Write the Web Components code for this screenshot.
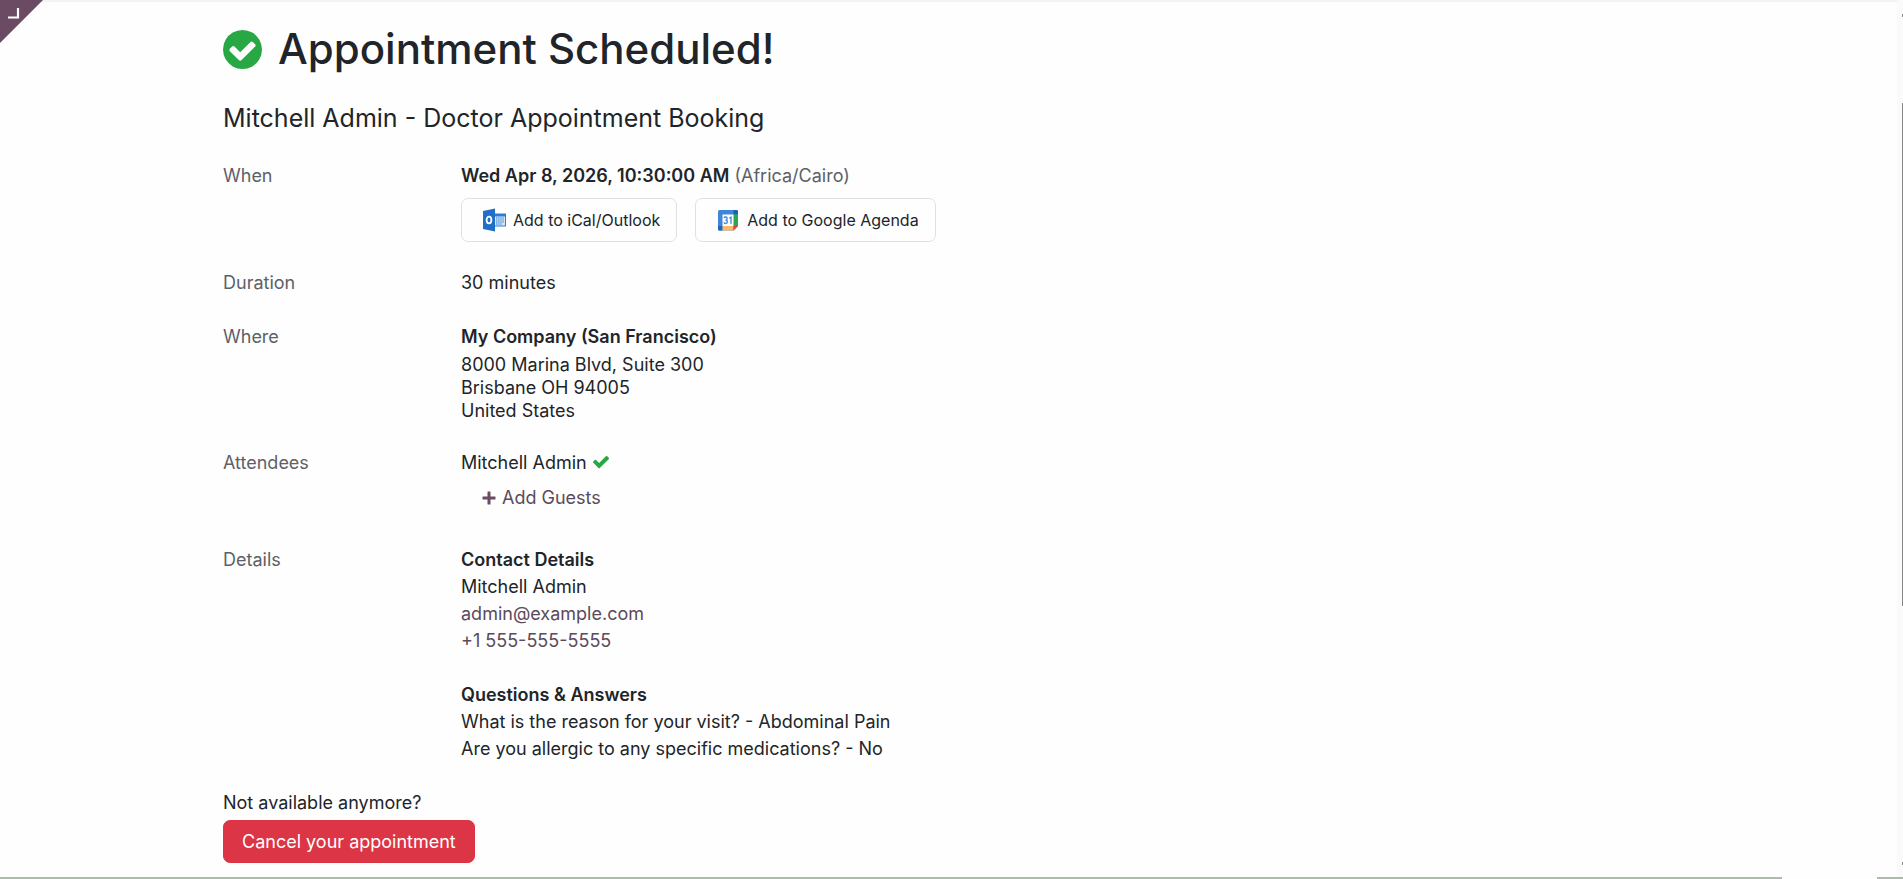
<!DOCTYPE html>
<html lang="en">
<head>
<meta charset="utf-8">
<meta name="viewport" content="width=device-width, initial-scale=1">
<title>Appointment Scheduled</title>
<style>
    body {
        margin: 0;
        background: #fefefe;
        color: #212529;
        font: 18px/27px Inter, "Liberation Sans", sans-serif;
    }
</style>
</head>
<body>
<appointment-page></appointment-page>

<script>
const icons = {
    circle: {
        box: "128 128 1536 1536",
        path: "M1412 734q0-28-18-46l-91-90q-19-19-45-19t-45 19l-408 407-226-226q-19-19-45-19t-45 19l-91 90q-18 18-18 46 0 27 18 45l362 362q19 19 45 19 27 0 46-19l543-543q18-18 18-45zm252 162q0 209-103 385.5t-279.5 279.5-385.5 103-385.5-103-279.5-279.5-103-385.5 103-385.5 279.5-279.5 385.5-103 385.5 103 279.5 279.5 103 385.5z"
    },
    check: {
        box: "121 330 1550 1192",
        path: "M1671 566q0 40-28 68l-724 724-136 136q-28 28-68 28t-68-28l-136-136-362-362q-28-28-28-68t28-68l136-136q28-28 68-28t68 28l294 295 656-657q28-28 68-28t68 28l136 136q28 28 28 68z"
    },
    plus: {
        box: "0 0 14 14",
        path: "M6 0.5h2q.5 0 .5.5v4.500h4.500q.5 0 .5.5v2q0 .5-.5.5h-4.500v4.500q0 .5-.5.5h-2q-.5 0-.5-.5v-4.500h-4.500q-.5 0-.5-.5v-2q0-.5.5-.5h4.500v-4.500q0-.5.5-.5z"
    }
};

class StatusIcon extends HTMLElement {
    constructor() {
        super();
        const icon = icons[this.getAttribute("name")];
        this.root = this.attachShadow({ mode: "open" });
        this.root.innerHTML = /*html*/`
            <style>
            :host {
                display: inline-flex;
                flex: none;
                width: 16px;
            }
            svg {
                width: 100%;
                fill: currentColor;
            }
            </style>
            <svg viewBox="${icon.box}" aria-hidden="true"><path d="${icon.path}"/></svg>
        `;
    }
}
customElements.define("status-icon", StatusIcon);

class CalendarLink extends HTMLElement {
    constructor() {
        super();
        this.root = this.attachShadow({ mode: "open" });
        this.root.innerHTML = /*html*/`
            <style>
            :host {
                display: block;
            }
            a {
                display: flex;
                align-items: center;
                gap: 6px;
                padding: 9px 16px 9px 18px;
                border: 1px solid #dee2e6;
                border-radius: 7px;
                color: #212529;
                font-size: 16px;
                line-height: 24px;
                text-decoration: none;
            }
            ::slotted(svg) {
                width: 27px;
                height: 24px;
            }
            </style>
            <a href="#"><slot name="icon"></slot><slot></slot></a>
        `;
    }
}
customElements.define("calendar-link", CalendarLink);

class InfoRow extends HTMLElement {
    constructor() {
        super();
        this.root = this.attachShadow({ mode: "open" });
        this.root.innerHTML = /*html*/`
            <style>
            :host {
                display: grid;
                grid-template-columns: 238px 1fr;
                margin-bottom: 27px;
            }
            .label {
                color: #5c6167;
            }
            </style>
            <div class="label">${this.getAttribute("label")}</div>
            <div><slot></slot></div>
        `;
    }
}
customElements.define("info-row", InfoRow);

class CornerToggle extends HTMLElement {
    constructor() {
        super();
        this.root = this.attachShadow({ mode: "open" });
        this.root.innerHTML = /*html*/`
            <style>
            :host {
                position: absolute;
                top: 0;
                left: 0;
            }
            button {
                display: block;
                padding: 0;
                border: 0;
                background: none;
            }
            svg {
                display: block;
            }
            </style>
            <button aria-label="Open editor">
                <svg width="43" height="43" viewBox="0 0 43 43">
                    <path d="M0 0H43L0 43Z" fill="#6b4a63"/>
                    <path d="M8 17.5H18V8" fill="none" stroke="#fff" stroke-width="2.2"/>
                </svg>
            </button>
        `;
    }
}
customElements.define("corner-toggle", CornerToggle);

class PageScrollbar extends HTMLElement {
    constructor() {
        super();
        this.root = this.attachShadow({ mode: "open" });
        this.root.innerHTML = /*html*/`
            <style>
            :host {
                position: absolute;
                top: 0;
                right: 0;
                bottom: 0;
                box-sizing: border-box;
                width: 6px;
                padding: 14px 0;
                display: flex;
                flex-direction: column;
                align-items: flex-end;
                background: #fafafa;
            }
            .arrow {
                width: 1px;
                height: 3px;
                background: #8b8b8b;
            }
            .track {
                flex: 1;
                display: grid;
                grid-template-rows: 86fr 503fr 256fr;
            }
            .thumb {
                grid-row: 2;
                width: 1px;
                background: #858585;
            }
            </style>
            <div class="arrow"></div>
            <div class="track"><div class="thumb"></div></div>
            <div class="arrow"></div>
        `;
    }
}
customElements.define("page-scrollbar", PageScrollbar);

class AppointmentPage extends HTMLElement {
    constructor() {
        super();
        this.root = this.attachShadow({ mode: "open" });
        this.root.innerHTML = /*html*/`
            <style>
            :host {
                display: block;
                position: relative;
                box-sizing: border-box;
                min-height: 100vh;
                padding: 0 6px 14px 0;
                overflow: hidden;
            }
            .shade {
                height: 2px;
                background: #f3f3f3;
            }
            main {
                max-width: 1451px;
                margin: 0 auto;
                padding-top: 20px;
            }
            h1, h2, p, address {
                margin: 0;
            }
            h1 {
                display: flex;
                align-items: center;
                gap: 16px;
                margin-bottom: 26px;
                font-size: 42px;
                font-weight: 500;
                line-height: 54px;
            }
            h1 status-icon {
                width: 39px;
            }
            h2 {
                margin-bottom: 28px;
                font-size: 25px;
                font-weight: 400;
                line-height: 32px;
            }
            strong {
                font-weight: 600;
            }
            status-icon.done {
                color: #28a745;
            }
            .muted {
                color: #5c6167;
            }
            .links {
                display: flex;
                flex-wrap: wrap;
                gap: 18px;
                margin-top: 9px;
            }
            address {
                margin-top: 3px;
                font-style: normal;
                line-height: 23px;
            }
            .person {
                display: flex;
                align-items: center;
                gap: 6px;
            }
            button {
                display: flex;
                align-items: center;
                gap: 6px;
                padding: 7px 18px;
                border: 1px solid transparent;
                border-radius: 7px;
                background: none;
                font: inherit;
            }
            .guests {
                padding: 7px 20px;
                color: #5b4a5c;
            }
            .guests status-icon {
                width: 14px;
                color: #6b4a63;
            }
            .contact a {
                display: table;
                color: #5b4a5c;
                text-decoration: none;
            }
            .answers {
                margin-top: 27px;
            }
            .cancel {
                margin-top: 4px;
                border-color: #dc3545;
                background: #dc3545;
                color: #fff;
            }
            .edge {
                position: absolute;
                left: 0;
                right: 0;
                bottom: 0;
                display: flex;
                justify-content: space-between;
            }
            .edge i {
                height: 2px;
                background: #adbbac;
            }
            .edge i:first-child {
                flex: 1;
                margin-right: 95px;
            }
            .edge i:last-child {
                width: 26px;
            }
            </style>
            <div class="shade"></div>
            <main>
                <h1><status-icon class="done" name="circle"></status-icon><span>Appointment Scheduled!</span></h1>
                <h2>Mitchell Admin - Doctor Appointment Booking</h2>

                <info-row label="When">
                    <p><strong>Wed Apr 8, 2026, 10:30:00 AM</strong> <span class="muted">(Africa/Cairo)</span></p>
                    <div class="links">
                        <calendar-link>
                            <svg slot="icon" viewBox="0 0 27 24" aria-hidden="true">
                                <path d="M14 5.500H26V18.500H14Z" fill="#2b7cd3"/>
                                <path d="M15 8.500H25V17.500H15Z" fill="#d9e8f7"/>
                                <path d="M16 10H24M16 12H24M16 14H24M16 16H22" stroke="#2b7cd3" stroke-width="1.200" stroke-dasharray="1.500 .6"/>
                                <path d="M3 3L15 .5V23.500L3 21Z" fill="#1e6fc5"/>
                                <ellipse cx="9" cy="12" rx="2.400" ry="3.300" fill="none" stroke="#fff" stroke-width="1.800"/>
                            </svg>
                            Add to iCal/Outlook
                        </calendar-link>
                        <calendar-link>
                            <svg slot="icon" viewBox="0 0 27 24" aria-hidden="true">
                                <path d="M5.500 2H22.500Q24 2 24 3.500V18L19.500 22.500H5.500Q4 22.500 4 21V3.500Q4 2 5.500 2Z" fill="#3f86d8"/>
                                <path d="M19.500 2H22.500Q24 2 24 3.500V6.500H19.500Z" fill="#1b5fb8"/>
                                <path d="M4 18H8.500V22.500H5.500Q4 22.500 4 21Z" fill="#1b66c0"/>
                                <path d="M19.500 6.500H24V18H19.500Z" fill="#2aa850"/>
                                <path d="M8.500 18H19.500V22.500H8.500Z" fill="#fbb969"/>
                                <path d="M19.500 18H24L19.500 22.500Z" fill="#e2423b"/>
                                <path d="M8.500 6.500H19.500V18H8.500Z" fill="#fff"/>
                                <path d="M10 10Q10.400 9 11.600 9Q13.200 9 13.200 10.500Q13.200 12 11.500 12Q13.400 12 13.400 13.700Q13.400 15.500 11.600 15.500Q10.200 15.500 9.900 14.300M15.200 10.300L17 9.200V15.700" fill="none" stroke="#3f86d8" stroke-width="1.300"/>
                            </svg>
                            Add to Google Agenda
                        </calendar-link>
                    </div>
                </info-row>

                <info-row label="Duration">30 minutes</info-row>

                <info-row label="Where">
                    <strong>My Company (San Francisco)</strong>
                    <address>8000 Marina Blvd, Suite 300<br>Brisbane OH 94005<br>United States</address>
                </info-row>

                <info-row label="Attendees">
                    <div class="person">Mitchell Admin <status-icon class="done" name="check"></status-icon></div>
                    <button class="guests"><status-icon name="plus"></status-icon>Add Guests</button>
                </info-row>

                <info-row label="Details">
                    <div class="contact">
                        <strong>Contact Details</strong>
                        <p>Mitchell Admin</p>
                        <a href="mailto:admin@example.com">admin@example.com</a>
                        <a href="tel:+15555555555">+1 555-555-5555</a>
                    </div>
                    <div class="answers">
                        <strong>Questions &amp; Answers</strong>
                        <p>What is the reason for your visit? - Abdominal Pain</p>
                        <p>Are you allergic to any specific medications? - No</p>
                    </div>
                </info-row>

                <p>Not available anymore?</p>
                <button class="cancel">Cancel your appointment</button>
            </main>
            <corner-toggle></corner-toggle>
            <page-scrollbar></page-scrollbar>
            <div class="edge"><i></i><i></i></div>
        `;
    }
}
customElements.define("appointment-page", AppointmentPage);
</script>
</body>
</html>
